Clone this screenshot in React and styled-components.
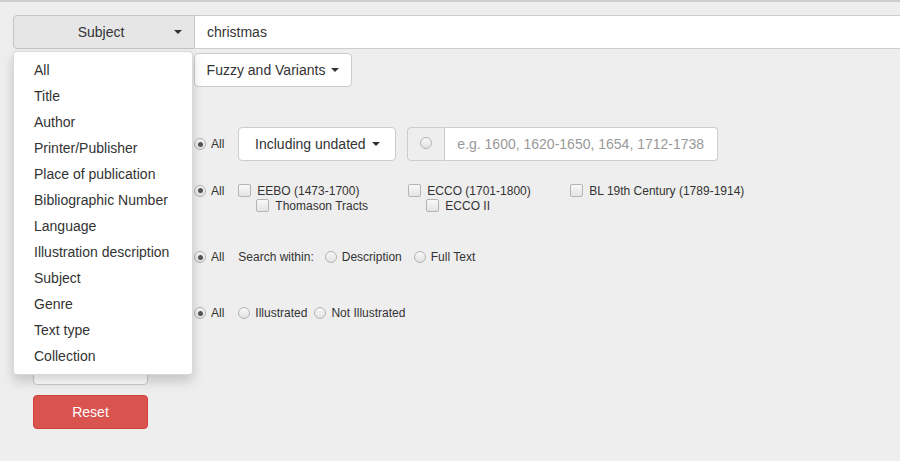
import React from "react";
import styled, { createGlobalStyle } from "styled-components";

const GlobalStyle = createGlobalStyle`
  html, body {
    margin: 0;
    padding: 0;
    background: #eeeeee;
    overflow: hidden;
  }
  body {
    border-top: 2px solid #cdcdcd;
    font-family: "Liberation Sans", Arial, sans-serif;
    color: #333;
  }
  * { box-sizing: border-box; }
`;

const fields = [
  "All",
  "Title",
  "Author",
  "Printer/Publisher",
  "Place of publication",
  "Bibliographic Number",
  "Language",
  "Illustration description",
  "Subject",
  "Genre",
  "Text type",
  "Collection",
];

function App() {
  return (
    <>
      <GlobalStyle />
      <Page>
        <SearchRow>
          <SubjectButton>
            <ButtonText>Subject</ButtonText>
            <Caret />
          </SubjectButton>
          <SearchInput defaultValue="christmas" />
          <Menu>
            {fields.map((f) => (
              <MenuItem key={f}>{f}</MenuItem>
            ))}
          </Menu>
        </SearchRow>

        <Form>
          <FormRow $top={4}>
            <LabelCol />
            <Controls>
              <DropButton $width={158}>
                Fuzzy and Variants <Caret />
              </DropButton>
            </Controls>
          </FormRow>

          <FormRow $top={40}>
            <LabelCol />
            <Controls>
              <RadioLabel>
                <Radio $checked />
                All
              </RadioLabel>
              <DropButton $width={158} $gapLeft={14}>
                Including undated <Caret />
              </DropButton>
              <InputGroup>
                <Addon>
                  <Radio />
                </Addon>
                <DateInput placeholder="e.g. 1600, 1620-1650, 1654, 1712-1738" />
              </InputGroup>
            </Controls>
          </FormRow>

          <FormRow $top={22} $height={30} $align="flex-start">
            <LabelCol />
            <Controls $align="flex-start">
              <RadioLabel $line>
                <Radio $checked />
                All
              </RadioLabel>
              <CollectionCol $width={170} $gapLeft={14}>
                <CheckLabel>
                  <Checkbox />
                  EEBO (1473-1700)
                </CheckLabel>
                <CheckLabel $indent>
                  <Checkbox />
                  Thomason Tracts
                </CheckLabel>
              </CollectionCol>
              <CollectionCol $width={162}>
                <CheckLabel>
                  <Checkbox />
                  ECCO (1701-1800)
                </CheckLabel>
                <CheckLabel $indent>
                  <Checkbox />
                  ECCO II
                </CheckLabel>
              </CollectionCol>
              <CollectionCol>
                <CheckLabel>
                  <Checkbox />
                  BL 19th Century (1789-1914)
                </CheckLabel>
              </CollectionCol>
            </Controls>
          </FormRow>

          <FormRow $top={27}>
            <LabelCol />
            <Controls>
              <RadioLabel>
                <Radio $checked />
                All
              </RadioLabel>
              <SmallText $gapLeft={14}>Search within:</SmallText>
              <RadioLabel $gapLeft={11}>
                <Radio />
                Description
              </RadioLabel>
              <RadioLabel $gapLeft={12}>
                <Radio />
                Full Text
              </RadioLabel>
            </Controls>
          </FormRow>

          <FormRow $top={22}>
            <LabelCol />
            <Controls>
              <RadioLabel>
                <Radio $checked />
                All
              </RadioLabel>
              <RadioLabel $gapLeft={14}>
                <Radio />
                Illustrated
              </RadioLabel>
              <RadioLabel $gapLeft={7}>
                <Radio />
                Not Illustrated
              </RadioLabel>
            </Controls>
          </FormRow>

          <LeftBlock $top={21}>
            <SearchButton />
            <ResetButton>Reset</ResetButton>
          </LeftBlock>
        </Form>
      </Page>
    </>
  );
}

const Page = styled.div`
  padding-top: 13px;
`;

const SearchRow = styled.div`
  position: relative;
  display: flex;
  padding-left: 13px;
  height: 34px;
`;

const SubjectButton = styled.div`
  display: flex;
  align-items: center;
  width: 182px;
  height: 34px;
  padding: 0 12px 0 16px;
  background: #e6e6e6;
  border: 1px solid #c4c4c4;
  border-radius: 4px 0 0 4px;
  font-size: 14px;
  color: #333;
`;

const ButtonText = styled.span`
  flex: 1;
  text-align: center;
`;

const SearchInput = styled.input`
  flex: 1;
  height: 34px;
  padding: 0 12px;
  border: 1px solid #cccccc;
  border-left: none;
  border-right: none;
  background: #fff;
  font: 14px "Liberation Sans", Arial, sans-serif;
  color: #333;
  outline: none;
`;

const Caret = styled.i`
  display: inline-block;
  flex: none;
  width: 0;
  height: 0;
  margin-left: 2px;
  vertical-align: middle;
  border-top: 4px solid #333;
  border-left: 4px solid transparent;
  border-right: 4px solid transparent;
`;

const Menu = styled.ul`
  position: absolute;
  z-index: 10;
  top: 36px;
  left: 13px;
  width: 180px;
  margin: 0;
  padding: 5px 0;
  list-style: none;
  background: #fff;
  border: 1px solid rgba(0, 0, 0, 0.15);
  border-radius: 4px;
  box-shadow: 0 6px 12px rgba(0, 0, 0, 0.175);
`;

const MenuItem = styled.li`
  padding: 3px 20px;
  font-size: 14px;
  line-height: 20px;
  color: #333;
  white-space: nowrap;
`;

const Form = styled.div`
  padding-left: 33px;
`;

const FormRow = styled.div`
  display: flex;
  align-items: ${(p) => p.$align || "center"};
  height: ${(p) => p.$height || 34}px;
  margin-top: ${(p) => p.$top}px;
`;

const LabelCol = styled.div`
  flex: none;
  width: 161px;
`;

const Controls = styled.div`
  display: flex;
  align-items: ${(p) => p.$align || "center"};
`;

const DropButton = styled.div`
  display: flex;
  align-items: center;
  justify-content: center;
  gap: 4px;
  width: ${(p) => p.$width}px;
  height: 34px;
  margin-left: ${(p) => p.$gapLeft || 0}px;
  background: #fff;
  border: 1px solid #cccccc;
  border-radius: 4px;
  font-size: 14px;
  color: #333;
  white-space: nowrap;
`;

const Radio = styled.span`
  position: relative;
  display: inline-block;
  flex: none;
  width: 12px;
  height: 12px;
  margin-right: 5px;
  border: 1px solid #b4b4b4;
  border-radius: 50%;
  background: linear-gradient(#f8f8f8, #e2e2e2);

  &::after {
    content: "";
    display: ${(p) => (p.$checked ? "block" : "none")};
    position: absolute;
    left: 2.5px;
    top: 2.5px;
    width: 5px;
    height: 5px;
    border-radius: 50%;
    background: #555;
  }
`;

const RadioLabel = styled.label`
  display: flex;
  align-items: center;
  height: ${(p) => (p.$line ? "15px" : "auto")};
  margin-left: ${(p) => p.$gapLeft || 0}px;
  font-size: 12px;
  color: #333;
  white-space: nowrap;
`;

const SmallText = styled.span`
  margin-left: ${(p) => p.$gapLeft || 0}px;
  font-size: 12px;
  color: #333;
  white-space: nowrap;
`;

const InputGroup = styled.div`
  display: flex;
  margin-left: 11px;
  height: 34px;
`;

const Addon = styled.div`
  display: flex;
  align-items: center;
  justify-content: center;
  width: 38px;
  padding-bottom: 3px;
  background: #eeeeee;
  border: 1px solid #cccccc;
  border-radius: 4px 0 0 4px;

  ${Radio} {
    margin-right: 0;
  }
`;

const DateInput = styled.input`
  width: 273px;
  height: 34px;
  padding: 0 12px;
  background: #fff;
  border: 1px solid #cccccc;
  border-left: none;
  border-radius: 0 4px 4px 0;
  font: 14px "Liberation Sans", Arial, sans-serif;
  color: #333;
  outline: none;

  &::placeholder {
    color: #999;
  }
`;

const CollectionCol = styled.div`
  display: flex;
  flex-direction: column;
  width: ${(p) => (p.$width ? `${p.$width}px` : "auto")};
  margin-left: ${(p) => p.$gapLeft || 0}px;
`;

const CheckLabel = styled.label`
  display: flex;
  align-items: center;
  height: 15px;
  padding-left: ${(p) => (p.$indent ? 18 : 0)}px;
  font-size: 12px;
  color: #333;
  white-space: nowrap;
`;

const Checkbox = styled.span`
  display: inline-block;
  flex: none;
  width: 13px;
  height: 13px;
  margin-right: 6px;
  border: 1px solid #b4b4b4;
  border-radius: 2px;
  background: linear-gradient(#f8f8f8, #e4e4e4);
`;

const LeftBlock = styled.div`
  display: flex;
  flex-direction: column;
  gap: 10px;
  width: 115px;
  margin-top: ${(p) => p.$top}px;
`;

const SearchButton = styled.div`
  height: 34px;
  background: #fff;
  border: 1px solid #cccccc;
  border-radius: 4px;
`;

const ResetButton = styled.div`
  display: flex;
  align-items: center;
  justify-content: center;
  height: 34px;
  background: #d9534f;
  border: 1px solid #d43f3a;
  border-radius: 4px;
  font-size: 14px;
  color: #fff;
`;

export default App;
